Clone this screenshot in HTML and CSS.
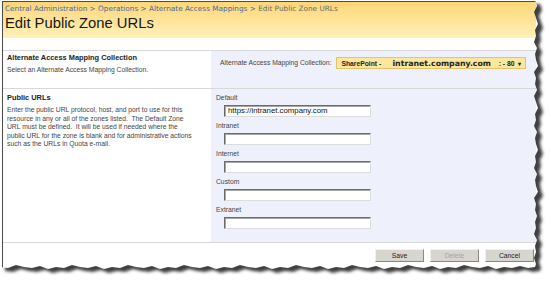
FILE: index.html
```html
<!DOCTYPE html>
<html>
<head>
<meta charset="utf-8">
<title>Edit Public Zone URLs</title>
<link rel="stylesheet" href="styles.css">
</head>
<body>
<div class="page">
  <div class="frame">
    <header class="titlebar">
      <div class="crumbs"><a>Central Administration</a> &gt; <a>Operations</a> &gt; <a>Alternate Access Mappings</a> &gt; <span class="current">Edit Public Zone URLs</span></div>
      <h1>Edit Public Zone URLs</h1>
    </header>
    <div class="form">
      <section class="row row-aam">
        <div class="desc">
          <h3>Alternate Access Mapping Collection</h3>
          <p>Select an Alternate Access Mapping Collection.</p>
        </div>
        <div class="ctrl ctrl-aam">
          <span class="lbl">Alternate Access Mapping Collection:</span>
          <div class="select">
            <span class="s1">SharePoint -</span>
            <span class="s2">intranet.company.com</span>
            <span class="s3">: - 80</span>
            <span class="arrow">&#9662;</span>
          </div>
        </div>
      </section>
      <section class="row row-urls">
        <div class="desc">
          <h3>Public URLs</h3>
          <p>Enter the public URL protocol, host, and port to use for this<br>resource in any or all of the zones listed.&nbsp; The Default Zone<br>URL must be defined.&nbsp; It will be used if needed where the<br>public URL for the zone is blank and for administrative actions<br>such as the URLs in Quota e-mail.</p>
        </div>
        <div class="ctrl fields">
          <div class="field"><label>Default</label><div class="input">https://intranet.company.com</div></div>
          <div class="field"><label>Intranet</label><div class="input"></div></div>
          <div class="field"><label>Internet</label><div class="input"></div></div>
          <div class="field"><label>Custom</label><div class="input"></div></div>
          <div class="field"><label>Extranet</label><div class="input"></div></div>
        </div>
      </section>
      <div class="buttons">
        <button class="btn">Save</button>
        <button class="btn disabled">Delete</button>
        <button class="btn">Cancel</button>
      </div>
    </div>
  </div>
  <svg class="torn" width="551" height="281" viewBox="0 0 551 281">
    <defs>
      <filter id="blur" x="-10%" y="-10%" width="120%" height="120%"><feGaussianBlur stdDeviation="1.5"/></filter>
      <clipPath id="outside"><path clip-rule="evenodd" d="M0,0H551V281H0Z M0,0 L535,0 L537,6 L534,12 L536,18 L538,24 L535,30 L536,36 L534,42 L537,48 L535,54 L536,60 L538,66 L534,72 L536,78 L535,84 L537,90 L534,96 L536,102 L538,108 L535,114 L536,120 L534,126 L537,132 L535,138 L536,144 L538,150 L535,156 L536,162 L534,168 L537,174 L535,180 L536,186 L538,192 L534,198 L536,204 L535,210 L537,216 L535,222 L536,228 L534,234 L537,240 L535,246 L536,252 L534,258 L536,264 L535,267 L528,268 L520,266 L512,268 L504,267 L496,269 L488,266 L480,268 L472,267 L464,265 L456,268 L448,267 L440,269 L432,266 L424,268 L416,267 L408,265 L400,268 L392,267 L384,269 L376,266 L368,268 L360,267 L352,265 L344,268 L336,267 L328,269 L320,266 L312,268 L304,267 L296,265 L288,268 L280,267 L272,269 L264,266 L256,268 L248,267 L240,265 L232,268 L224,267 L216,269 L208,266 L200,268 L192,267 L184,265 L176,268 L168,267 L160,269 L152,266 L144,268 L136,267 L128,265 L120,268 L112,267 L104,269 L96,266 L88,268 L80,267 L72,265 L64,268 L56,267 L48,269 L40,266 L32,268 L24,267 L16,265 L8,268 L0,267 Z"/></clipPath>
    </defs>
    <path fill="#fff" fill-rule="evenodd" d="M0,0H551V281H0Z M0,0 L535,0 L537,6 L534,12 L536,18 L538,24 L535,30 L536,36 L534,42 L537,48 L535,54 L536,60 L538,66 L534,72 L536,78 L535,84 L537,90 L534,96 L536,102 L538,108 L535,114 L536,120 L534,126 L537,132 L535,138 L536,144 L538,150 L535,156 L536,162 L534,168 L537,174 L535,180 L536,186 L538,192 L534,198 L536,204 L535,210 L537,216 L535,222 L536,228 L534,234 L537,240 L535,246 L536,252 L534,258 L536,264 L535,267 L528,268 L520,266 L512,268 L504,267 L496,269 L488,266 L480,268 L472,267 L464,265 L456,268 L448,267 L440,269 L432,266 L424,268 L416,267 L408,265 L400,268 L392,267 L384,269 L376,266 L368,268 L360,267 L352,265 L344,268 L336,267 L328,269 L320,266 L312,268 L304,267 L296,265 L288,268 L280,267 L272,269 L264,266 L256,268 L248,267 L240,265 L232,268 L224,267 L216,269 L208,266 L200,268 L192,267 L184,265 L176,268 L168,267 L160,269 L152,266 L144,268 L136,267 L128,265 L120,268 L112,267 L104,269 L96,266 L88,268 L80,267 L72,265 L64,268 L56,267 L48,269 L40,266 L32,268 L24,267 L16,265 L8,268 L0,267 Z"/>
    <g clip-path="url(#outside)">
      <path fill="#404040" filter="url(#blur)" transform="translate(5,4)" d="M0,0 L535,0 L537,6 L534,12 L536,18 L538,24 L535,30 L536,36 L534,42 L537,48 L535,54 L536,60 L538,66 L534,72 L536,78 L535,84 L537,90 L534,96 L536,102 L538,108 L535,114 L536,120 L534,126 L537,132 L535,138 L536,144 L538,150 L535,156 L536,162 L534,168 L537,174 L535,180 L536,186 L538,192 L534,198 L536,204 L535,210 L537,216 L535,222 L536,228 L534,234 L537,240 L535,246 L536,252 L534,258 L536,264 L535,267 L528,268 L520,266 L512,268 L504,267 L496,269 L488,266 L480,268 L472,267 L464,265 L456,268 L448,267 L440,269 L432,266 L424,268 L416,267 L408,265 L400,268 L392,267 L384,269 L376,266 L368,268 L360,267 L352,265 L344,268 L336,267 L328,269 L320,266 L312,268 L304,267 L296,265 L288,268 L280,267 L272,269 L264,266 L256,268 L248,267 L240,265 L232,268 L224,267 L216,269 L208,266 L200,268 L192,267 L184,265 L176,268 L168,267 L160,269 L152,266 L144,268 L136,267 L128,265 L120,268 L112,267 L104,269 L96,266 L88,268 L80,267 L72,265 L64,268 L56,267 L48,269 L40,266 L32,268 L24,267 L16,265 L8,268 L0,267 Z"/>
    </g>
  </svg>
</div>
</body>
</html>
```

FILE: styles.css
```css
html, body {
  margin: 0;
  padding: 0;
  background: #fff;
}
body {
  font-family: "Liberation Sans", Arial, sans-serif;
  font-size: 6.75px;
  color: #333;
}
.page {
  position: relative;
  width: 551px;
  height: 281px;
  overflow: hidden;
}
.frame {
  margin: 1px 0 0 2px;
  width: 533px;
  height: 270px;
  border-left: 1px solid #4a4a4a;
  border-top: 1px solid #4a4a4a;
}
.titlebar {
  box-sizing: border-box;
  height: 36px;
  padding: 2px 0 0 2px;
  background: linear-gradient(#fdd676, #fff1bb);
}
.crumbs {
  font-family: "DejaVu Sans", Verdana, sans-serif;
  font-size: 7.3px;
  line-height: 9px;
  color: #4d66a6;
  white-space: nowrap;
}
.crumbs .current {
  color: #6a6a6a;
}
h1 {
  margin: 1.5px 0 0;
  font-size: 14.8px;
  line-height: 16px;
  font-weight: normal;
  color: #151515;
}
.form {
  margin-top: 12px;
}
.row {
  display: flex;
  border-top: 1px solid #d8d8d8;
}
.desc {
  box-sizing: border-box;
  width: 208px;
  padding: 2px 4px 0 4px;
}
.desc h3 {
  margin: 0;
  font-size: 7.4px;
  line-height: 9px;
  font-weight: bold;
  color: #222;
}
.desc p {
  margin: 3.5px 0 0;
  line-height: 8.5px;
  color: #444;
  white-space: nowrap;
}
.row-urls .desc {
  padding-top: 4px;
}
.row-urls .desc p {
  margin-top: 4px;
}
.ctrl {
  flex: 1;
  background: #eef1fb;
}
.ctrl-aam {
  display: flex;
  align-items: flex-start;
  gap: 5px;
  height: 37px;
  box-sizing: border-box;
  padding: 6px 0 0 9px;
}
.ctrl-aam .lbl {
  line-height: 12px;
  color: #444;
  white-space: nowrap;
}
.select {
  box-sizing: border-box;
  width: 190px;
  height: 12px;
  display: flex;
  align-items: center;
  padding: 0 4px;
  background: #fde79c;
  border: 1px solid #e6c36a;
  font-weight: bold;
  color: #222;
  white-space: nowrap;
}
.select .s1 {
  width: 51px;
}
.select .s2 {
  font-family: "DejaVu Sans", Verdana, sans-serif;
  font-size: 7.8px;
  width: 100px;
}
.select .s3 {
  margin-left: auto;
  font-weight: bold;
}
.select .arrow {
  margin-left: 4px;
  font-size: 6px;
}
.fields {
  box-sizing: border-box;
  padding: 4px 0 13px 5px;
}
.field label {
  display: block;
  line-height: 9px;
  color: #444;
}
.field .input {
  box-sizing: border-box;
  width: 147px;
  height: 12px;
  margin: 3px 0 4px 8px;
  padding-left: 3px;
  background: #fff;
  border: 1px solid;
  border-color: #6a6a6a #dcdcdc #dcdcdc #6a6a6a;
  box-shadow: inset 1px 1px 0 #a8a8a8;
  font-size: 7.8px;
  line-height: 10px;
  color: #111;
  white-space: nowrap;
}
.field:last-child .input {
  margin-bottom: 0;
}
.buttons {
  display: flex;
  justify-content: flex-end;
  gap: 6px;
  border-top: 1px solid #d8d8d8;
  padding: 6px 2px 0 0;
}
.btn {
  box-sizing: border-box;
  width: 49px;
  height: 13px;
  padding: 0;
  font-family: "Liberation Sans", Arial, sans-serif;
  font-size: 6.8px;
  color: #222;
  background: #d8d5cf;
  border: 1px solid;
  border-color: #f2f1ee #8a8780 #8a8780 #f2f1ee;
}
.btn.disabled {
  color: #a6a6a6;
}
.torn {
  position: absolute;
  left: 0;
  top: 0;
  pointer-events: none;
}
```
